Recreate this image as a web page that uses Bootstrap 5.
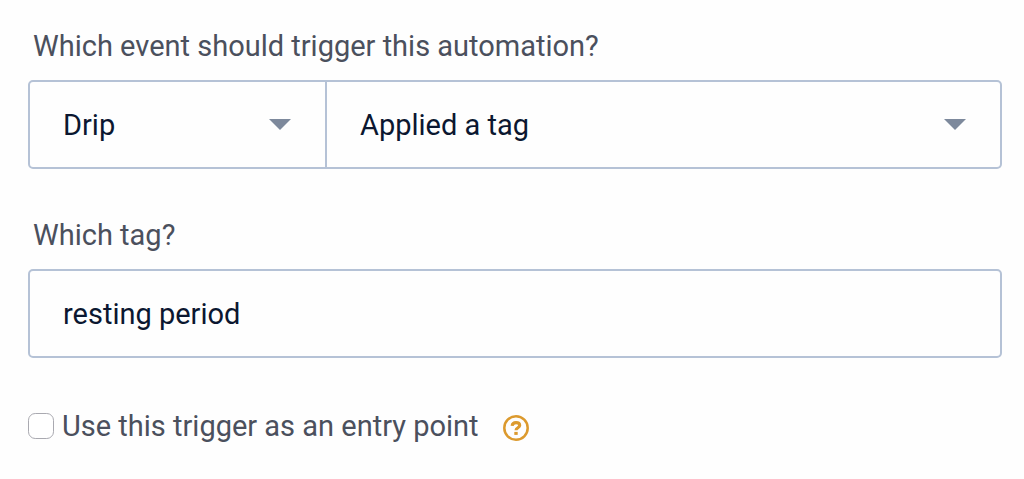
<!DOCTYPE html>
<html lang="en">
<head>
<meta charset="utf-8">
<meta name="viewport" content="width=device-width, initial-scale=1">
<title>Automation trigger</title>
<link href="https://cdn.jsdelivr.net/npm/bootstrap@5.3.0/dist/css/bootstrap.min.css" rel="stylesheet">
<style>
  body { font-family: Roboto, "Open Sans", sans-serif; font-size: 29px; line-height: 36px; color: #4b505d; background: #fefefe; }
  .trigger-form { padding: 28px 22px 28px 28px; }
  .field-label { display: block; margin: 0 0 16px 5px; }
  .field-box { height: 89px; padding: 0 33px; font-size: 29px; line-height: 36px; color: #0b1730; background-color: #fefefe; border: 2px solid #b5c2d6; border-radius: 5px; }
  .form-select.field-box { padding-right: 64px; background-image: url("data:image/svg+xml,%3Csvg xmlns='http://www.w3.org/2000/svg' viewBox='0 0 22 11'%3E%3Cpath fill='%237d899c' d='M0 0h22L11 11z'/%3E%3C/svg%3E"); background-size: 22px 11px; background-position: right 34px center; }
  .source-select.form-select { flex: 0 0 299px; }
  .event-select.form-select { border-left: 0; }
  .field-group { margin-bottom: 48px; }
  .entry-row { padding-top: 2px; }
  .entry-check { width: 26px; height: 26px; margin: 0; border: 1px solid #a9a9b0; border-radius: 5px; background-color: #fff; }
  .help-button { margin: 4px 0 0 24px; }
</style>
</head>
<body>
<form class="trigger-form container-fluid">
  <div class="field-group">
    <label class="field-label" for="source">Which event should trigger this automation?</label>
    <div class="input-group flex-nowrap">
      <select class="form-select field-box source-select" id="source"><option>Drip</option></select>
      <select class="form-select field-box event-select ms-0" aria-label="Event"><option>Applied a tag</option></select>
    </div>
  </div>
  <div class="field-group">
    <label class="field-label" for="tag">Which tag?</label>
    <input class="form-control field-box" type="text" id="tag" value="resting period">
  </div>
  <div class="entry-row d-flex align-items-center">
    <input class="form-check-input entry-check flex-shrink-0" type="checkbox" id="entry">
    <label class="ms-2" for="entry">Use this trigger as an entry point</label>
    <button class="btn p-0 border-0 d-flex flex-shrink-0 help-button" type="button" aria-label="Help">
      <svg width="26" height="26" viewBox="0 0 26 26" fill="none" stroke="#dc9a2e" aria-hidden="true">
        <circle cx="13" cy="13" r="11.7" stroke-width="2.500"/>
        <path d="M9.100 10.900C9.400 8.700 11 7.600 13 7.600c2.300 0 3.700 1.100 3.700 2.900 0 2.300-3.700 2.200-3.700 4.800" stroke-width="3.100"/>
        <path d="M11.300 18.400h3.400" stroke-width="3"/>
      </svg>
    </button>
  </div>
</form>
<script src="https://cdn.jsdelivr.net/npm/bootstrap@5.3.0/dist/js/bootstrap.bundle.min.js"></script>
</body>
</html>
